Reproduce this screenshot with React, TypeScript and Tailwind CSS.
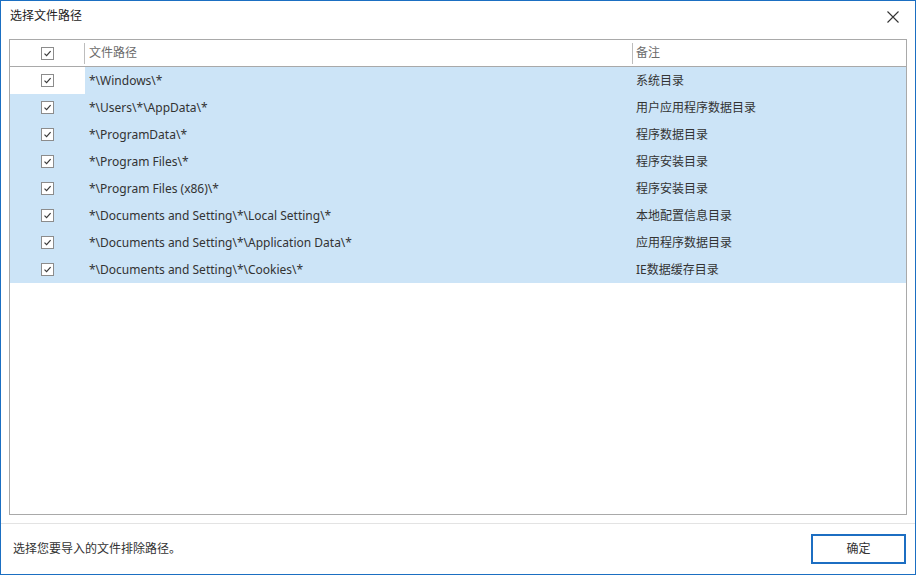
import React from "react";

const rows = [
  { path: "*\\Windows\\*", note: "系统目录" },
  { path: "*\\Users\\*\\AppData\\*", note: "用户应用程序数据目录" },
  { path: "*\\ProgramData\\*", note: "程序数据目录" },
  { path: "*\\Program Files\\*", note: "程序安装目录" },
  { path: "*\\Program Files (x86)\\*", note: "程序安装目录" },
  { path: "*\\Documents and Setting\\*\\Local Setting\\*", note: "本地配置信息目录" },
  { path: "*\\Documents and Setting\\*\\Application Data\\*", note: "应用程序数据目录" },
  { path: "*\\Documents and Setting\\*\\Cookies\\*", note: "IE数据缓存目录" },
];

function CheckBox() {
  return (
    <span className="flex h-[13px] w-[13px] items-center justify-center border border-[#8c8c8c] bg-white">
      <svg width="9" height="9" viewBox="0 0 9 9" fill="none">
        <path d="M1.5 4.6 L3.6 6.6 L7.6 2.2" stroke="#3a3a3a" strokeWidth="1.2" />
      </svg>
    </span>
  );
}

export default function App() {
  return (
    <div
      className="flex h-[575px] w-[916px] flex-col border border-[#1b6fc2] bg-white text-[12px] text-[#333333]"
      style={{ fontFamily: '"Noto Sans", "Noto Sans CJK SC", sans-serif' }}
    >
      {/* title bar */}
      <div className="flex h-[38px] items-start justify-between pl-[9px] pr-[16px] pt-[6px]">
        <span className="leading-[18px] text-[#222222]">选择文件路径</span>
        <svg width="12" height="12" viewBox="0 0 12 12" className="mt-[4px]">
          <path d="M0.5 0.5 L11.5 11.5 M11.5 0.5 L0.5 11.5" stroke="#333333" strokeWidth="1.1" />
        </svg>
      </div>

      {/* table */}
      <div className="mx-[8px] flex h-[476px] flex-col border border-[#a9a9a9]">
        <div className="flex h-[27px] shrink-0 items-center border-b border-[#a9a9a9] text-[#6b6b6b]">
          <div className="flex w-[74px] justify-center">
            <CheckBox />
          </div>
          <div className="h-[21px] w-px bg-[#bdbdbd]" />
          <div className="w-[547px] pl-[4px]">文件路径</div>
          <div className="h-[21px] w-px bg-[#bdbdbd]" />
          <div className="flex-1 pl-[3px]">备注</div>
        </div>
        {rows.map((r, i) => (
          <div key={i} className="flex h-[27px] items-center bg-[#cce4f7]">
            <div className={`flex h-full w-[75px] items-center justify-center ${i === 0 ? "bg-white" : ""}`}>
              <CheckBox />
            </div>
            <div className="w-[547px] pl-[4px]">{r.path}</div>
            <div className="flex-1 pl-[4px]">{r.note}</div>
          </div>
        ))}
      </div>

      {/* footer */}
      <div className="mt-[8px] flex flex-1 items-center justify-between border-t border-[#e3e3e3] pl-[12px] pr-[9px]">
        <span>选择您要导入的文件排除路径。</span>
        <button className="h-[30px] w-[95px] border-2 border-[#1c6ec2] bg-white text-[12px] text-[#333333]">
          确定
        </button>
      </div>
    </div>
  );
}
